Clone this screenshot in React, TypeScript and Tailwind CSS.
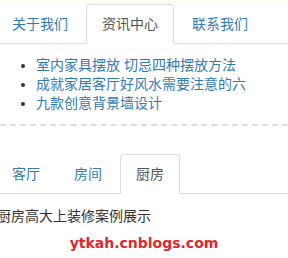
import React, { useState } from 'react';

const font = { fontFamily: '"Liberation Sans", "Noto Sans CJK SC", sans-serif' };

const topTabs = ['关于我们', '资讯中心', '联系我们'];
const roomTabs = ['客厅', '房间', '厨房'];
const news = ['室内家具摆放 切忌四种摆放方法', '成就家居客厅好风水需要注意的六', '九款创意背景墙设计'];

type TabsProps = { items: string[]; active: number; onPick: (i: number) => void };

const Tabs: React.FC<TabsProps> = ({ items, active, onPick }) => (
  <ul className="flex border-b border-[#ddd] -ml-1">
    {items.map((t, i) => (
      <li key={t} className="-mb-px mr-[2px]">
        <a
          href="#"
          onClick={(e) => {
            e.preventDefault();
            onPick(i);
          }}
          className={
            i === active
              ? 'block px-[15px] py-[9px] leading-[20px] text-[14px] rounded-t-[4px] border border-[#ddd] border-b-white bg-white text-[#555]'
              : 'block px-[15px] py-[9px] leading-[20px] text-[14px] rounded-t-[4px] border border-transparent text-[#337ab7]'
          }
        >
          {t}
        </a>
      </li>
    ))}
  </ul>
);

export default function App() {
  const [top, setTop] = useState(1);
  const [room, setRoom] = useState(2);

  return (
    <div className="w-[288px] h-[258px] overflow-hidden bg-white text-[14px] text-[#333]" style={font}>
      <div className="h-1 bg-[#fffdf6]" />
      <Tabs items={topTabs} active={top} onPick={setTop} />
      <ul className="list-disc pl-[40px] -ml-1 mt-[12px] leading-[19px] w-[254px] overflow-hidden whitespace-nowrap">
        {news.map((n) => (
          <li key={n}>
            <a href="#" className="text-[#337ab7]">
              {n}
            </a>
          </li>
        ))}
      </ul>
      <div className="mt-[11px] border-t-2 border-dashed border-[#ddd]" />
      <div className="mt-[28px]">
        <Tabs items={roomTabs} active={room} onPick={setRoom} />
      </div>
      <p className="-ml-[3px] mt-[12px] leading-[20px]">厨房高大上装修案例展示</p>
      <p
        className="mt-[8px] text-center font-bold text-[14px] leading-[18px] text-[#e3262e]"
        style={{ fontFamily: '"DejaVu Sans", sans-serif' }}
      >
        ytkah.cnblogs.com
      </p>
    </div>
  );
}
